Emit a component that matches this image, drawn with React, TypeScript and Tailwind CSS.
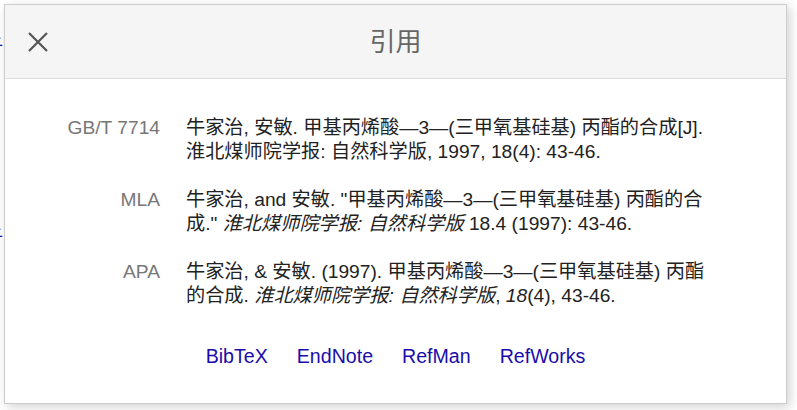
import React from 'react';

type Cite = { label: string; body: React.ReactNode };

const CITES: Cite[] = [
  {
    label: 'GB/T 7714',
    body: <>牛家治, 安敏. 甲基丙烯酸—3—(三甲氧基硅基) 丙酯的合成[J]. 淮北煤师院学报: 自然科学版, 1997, 18(4): 43-46.</>,
  },
  {
    label: 'MLA',
    body: (
      <>
        牛家治, and 安敏. "甲基丙烯酸—3—(三甲氧基硅基) 丙酯的合成." <i>淮北煤师院学报: 自然科学版</i> 18.4 (1997): 43-46.
      </>
    ),
  },
  {
    label: 'APA',
    body: (
      <>
        牛家治, &amp; 安敏. (1997). 甲基丙烯酸—3—(三甲氧基硅基) 丙酯的合成. <i>淮北煤师院学报: 自然科学版</i>, <i>18</i>(4), 43-46.
      </>
    ),
  },
];

const LINKS = ['BibTeX', 'EndNote', 'RefMan', 'RefWorks'];

const App: React.FC = () => {
  return (
    <div className="relative min-h-screen overflow-hidden bg-white pt-[4px] pl-[4px] font-['Liberation_Sans','Noto_Sans_CJK_SC',sans-serif]">
      {/* page behind the dialog */}
      <span className="absolute left-[-15px] top-[33px] text-[18px] text-[#1a0dab]">子</span>
      <span className="absolute left-[-15px] top-[224px] text-[18px] text-[#1a0dab]">子</span>

      {/* Cite dialog */}
      <div className="relative w-[783px] h-[400px] border border-[#cccccc] bg-white shadow-[3px_3px_10px_rgba(0,0,0,0.18)] flex flex-col">
        {/* Header */}
        <div className="h-[74px] shrink-0 bg-[#f5f5f5] border-b border-[#dcdcdc] flex items-center relative">
          <button className="absolute left-[22px] top-[26px] w-[22px] h-[22px] flex items-center justify-center">
            <svg width="22" height="22" viewBox="0 0 22 22" fill="none" stroke="#555" strokeWidth="2.2">
              <path d="M2 2L20 20M20 2L2 20" />
            </svg>
          </button>
          <h1 className="flex-1 text-center text-[26px] text-[#666] leading-none">引用</h1>
        </div>

        {/* Body */}
        <div className="flex-1 pt-[37px] flex flex-col">
          <div className="flex flex-col gap-[24px]">
            {CITES.map(c => (
              <div key={c.label} className="flex text-[19.2px] leading-[24px]">
                <div className="w-[155px] shrink-0 text-right text-[#777]">{c.label}</div>
                <div className="ml-[26px] w-[535px] text-[#222]">{c.body}</div>
              </div>
            ))}
          </div>
          <div className="mt-[36px] flex justify-center gap-[29px] text-[19.6px] leading-[24px] text-[#1a0dab]">
            {LINKS.map(l => (
              <a key={l} href="#">{l}</a>
            ))}
          </div>
        </div>
      </div>
    </div>
  );
};

export default App;
